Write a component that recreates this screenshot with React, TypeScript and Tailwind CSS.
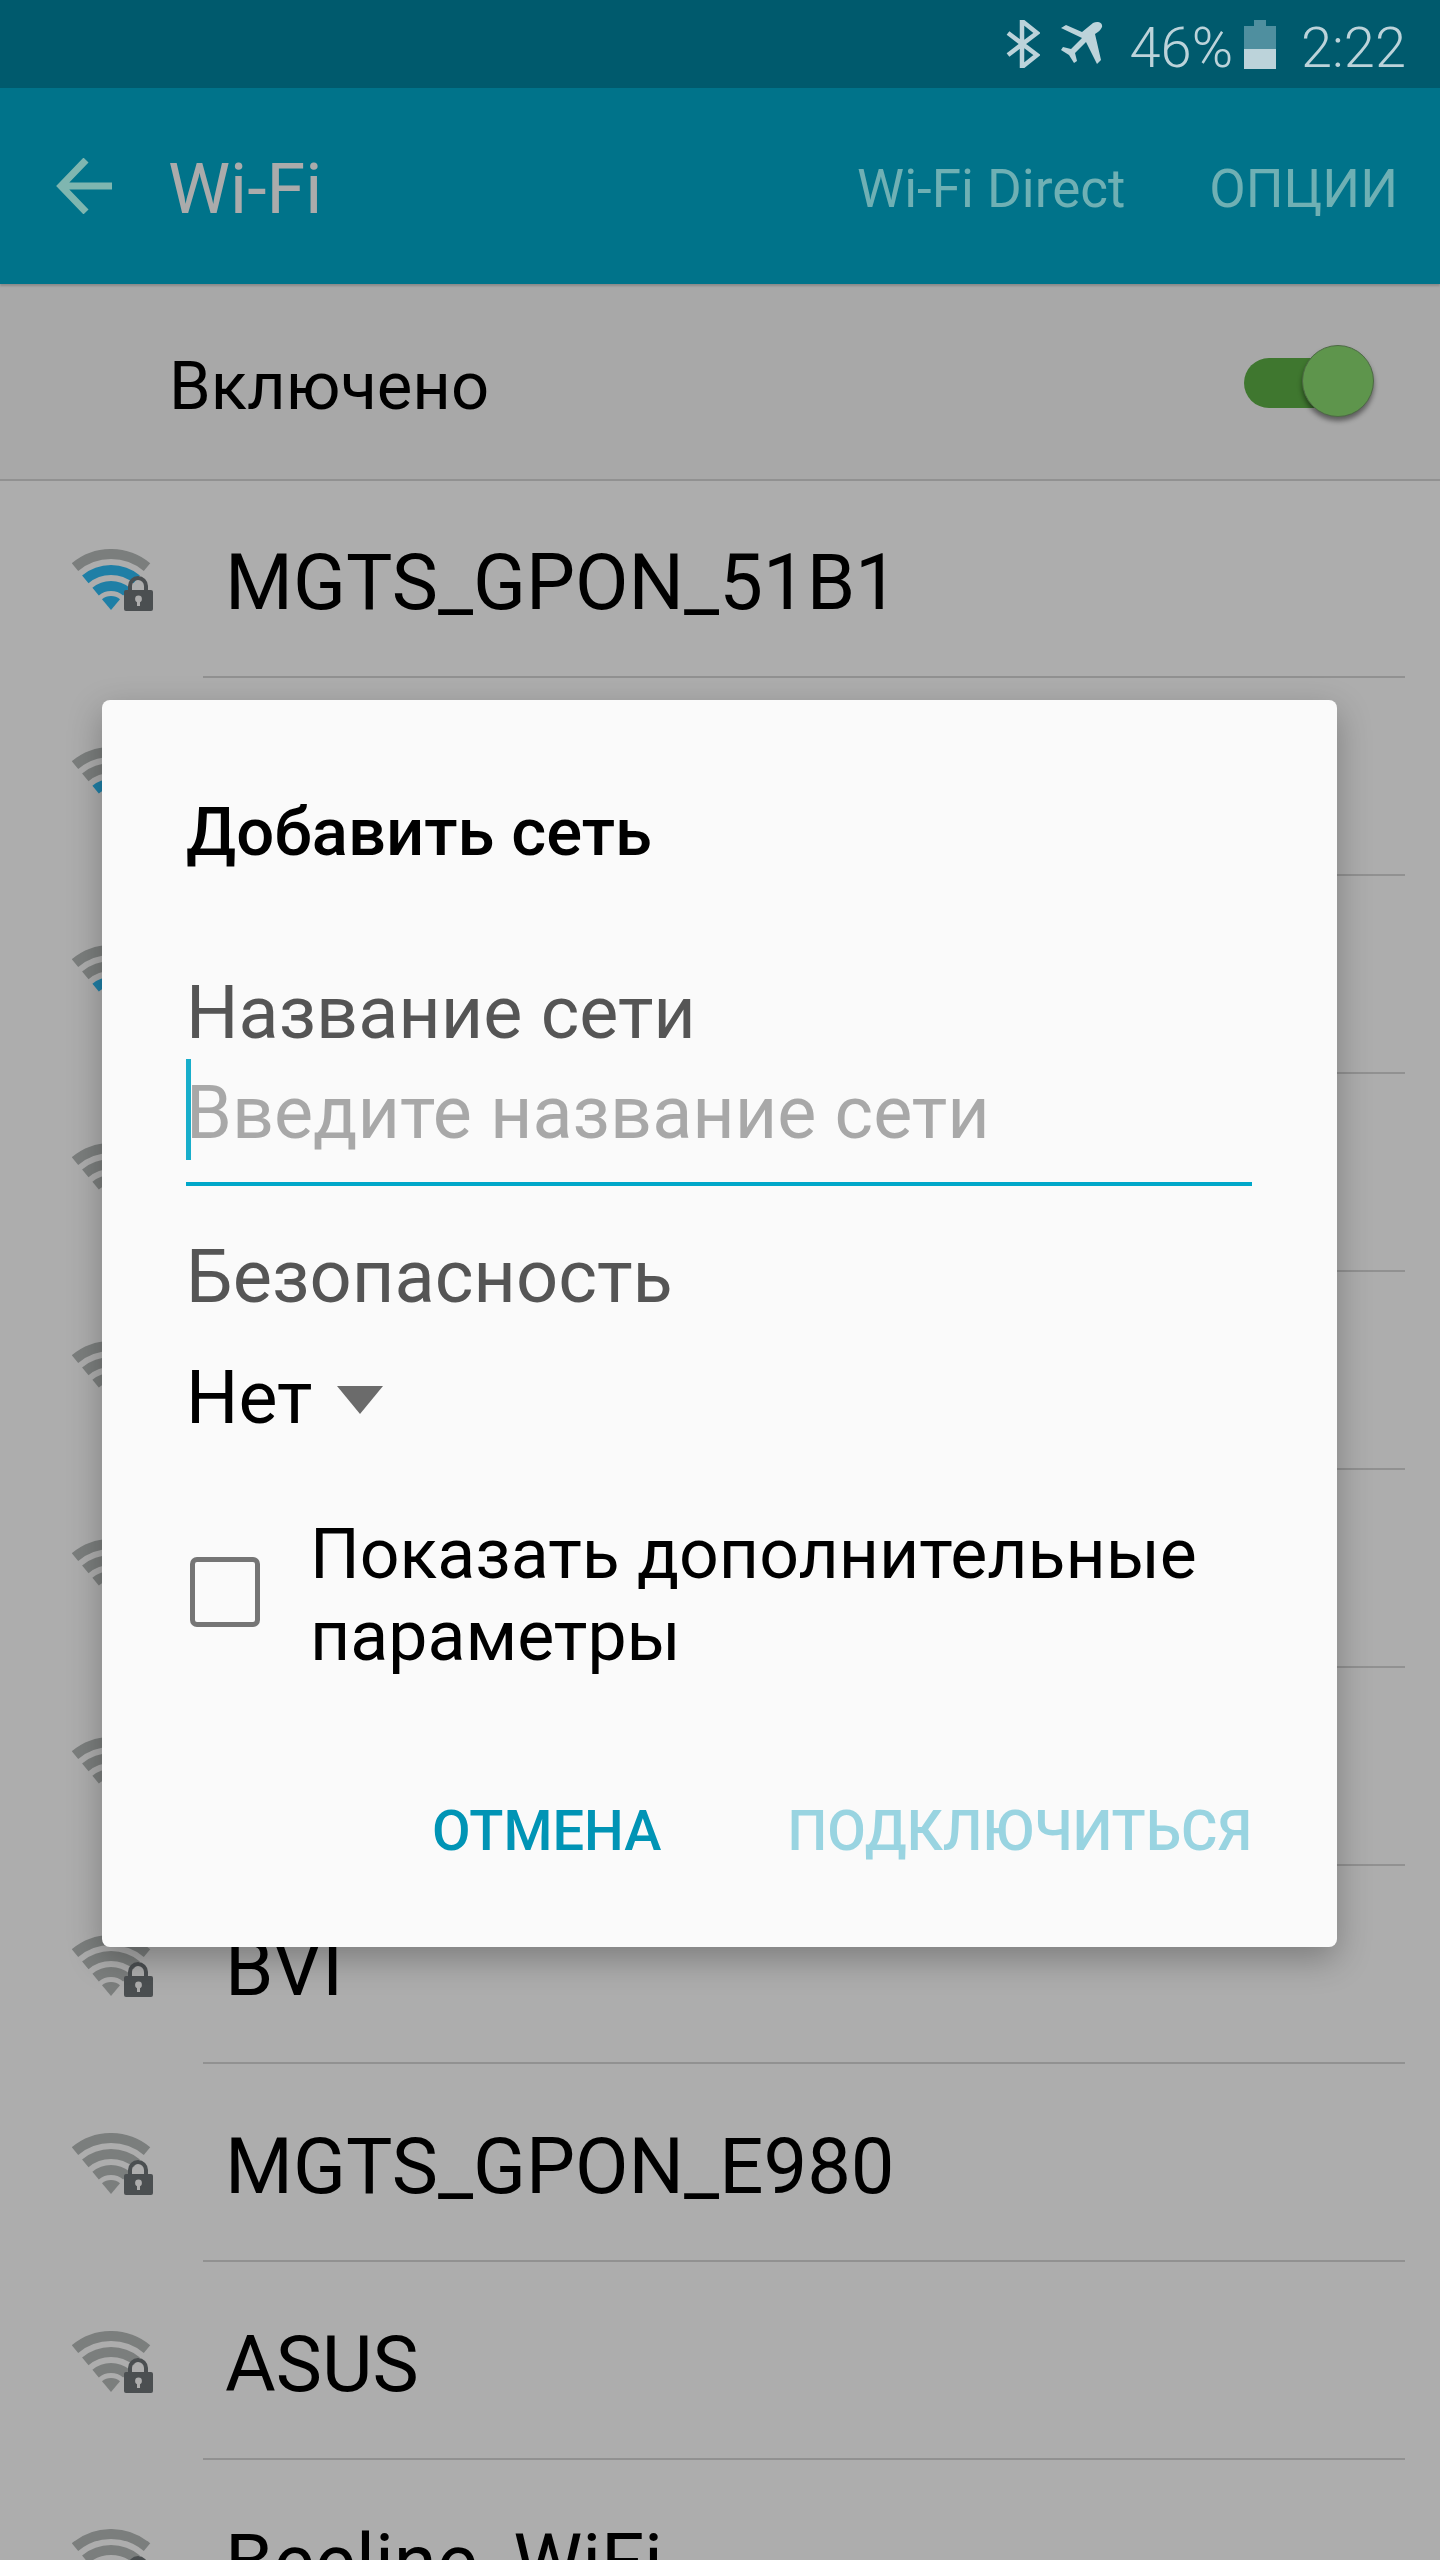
const font = { fontFamily: "Roboto, 'Noto Sans', sans-serif" };

const networks = [
  { name: "MGTS_GPON_51B1", level: 3 },
  { name: "", level: 2 },
  { name: "", level: 2 },
  { name: "", level: 0 },
  { name: "", level: 0 },
  { name: "", level: 0 },
  { name: "", level: 0 },
  { name: "BVI", level: 0 },
  { name: "MGTS_GPON_E980", level: 0 },
  { name: "ASUS", level: 0 },
  { name: "Beeline_WiFi", level: 0 },
];

const WifiLock = ({ level }: { level: number }) => {
  const blue = "#1f7fa6";
  const grey = "#7b7e7d";
  return (
    <svg width="82" height="62" viewBox="0 0 82 62" className="shrink-0">
      <g fill="none" strokeWidth="10">
        <path d="M3 18.1A56 56 0 0 1 75 18.1" stroke={grey} />
        <path d="M13.3 30.4A40 40 0 0 1 64.7 30.4" stroke={level >= 3 ? blue : grey} />
        <path d="M23.6 42.6A24 24 0 0 1 54.4 42.6" stroke={level >= 2 ? blue : grey} />
      </g>
      <path d="M39 61L30 50.3A14 14 0 0 1 48 50.3Z" fill={level >= 1 ? blue : grey} />
      <path d="M58 41v-4a8 8 0 0 1 16 0v4" fill="none" stroke="#4b4f51" strokeWidth="4" />
      <rect x="52" y="41" width="29" height="21" rx="2" fill="#4b4f51" />
      <circle cx="66.5" cy="50" r="3.4" fill="#adadad" />
      <rect x="65" y="50" width="3" height="7" fill="#adadad" />
    </svg>
  );
};

const App = () => {
  return (
    <div className="relative w-[1440px] h-[2560px] overflow-hidden bg-[#adadad] text-black" style={font}>
      {/* status bar */}
      <div className="h-[88px] bg-[#005a6d] flex items-center justify-end pr-[34px] text-[#bcd3da]">
        <svg width="34" height="48" viewBox="0 0 34 48" className="mr-[20px]">
          <path d="M2 13L31 35L16 47V1L31 13L2 35" fill="none" stroke="#bcd3da" strokeWidth="4.5" />
        </svg>
        <svg width="44" height="44" viewBox="0 0 44 44" className="mr-[26px]" fill="#bcd3da">
          <path d="M1 6L6 3L22 10L33 1C37-1 43 0 42 5C41 8 38 10 35 12L41 38L37 42L26 20L15 31L17 39L14 41L9 33L1 28L3 25L11 27L22 16L1 6Z" />
        </svg>
        <span className="text-[56px] leading-none font-light mr-[11px] mt-[8px]">46%</span>
        <div className="w-[32px] h-[49px] flex flex-col items-center mr-[25px]">
          <div className="w-[12px] h-[6px] bg-[#4f8f9f]" />
          <div className="w-[32px] h-[23px] bg-[#4f8f9f]" />
          <div className="w-[32px] h-[20px] bg-[#bcd3da]" />
        </div>
        <span className="text-[56px] leading-none font-light mt-[8px]">2:22</span>
      </div>

      {/* toolbar */}
      <div className="relative h-[196px] bg-[#00738a] flex items-center shadow-[0_2px_2px_rgba(0,0,0,0.18)]">
        <svg width="58" height="56" viewBox="0 0 58 56" className="ml-[56px] mr-[54px]">
          <path d="M56 28H5M30 2L5 28L30 54" fill="none" stroke="#7fb6b0" strokeWidth="7" />
        </svg>
        <span className="text-[70px] text-[#ababab] leading-none mt-[6px]">Wi-Fi</span>
        <span className="ml-auto text-[53px] text-[#6fb0b4] leading-none mt-[6px]">Wi-Fi Direct</span>
        <span className="ml-[84px] mr-[42px] text-[53px] text-[#6fb0b4] leading-none mt-[6px]">ОПЦИИ</span>
      </div>

      {/* toggle row */}
      <div className="h-[197px] bg-[#a8a8a8] border-b-2 border-[#919191] flex items-center pl-[169px] pr-[66px]">
        <span className="text-[67px] leading-none mt-[10px]">Включено</span>
        <div className="ml-auto relative w-[130px] h-[74px] flex items-center">
          <div className="w-[108px] h-[50px] rounded-full bg-[#3f772f] mt-[2px]" />
          <div className="absolute right-0 top-0 w-[72px] h-[72px] rounded-full bg-[#5e954c] border border-[#4d6a44] shadow-[0_4px_5px_rgba(0,0,0,0.45)]" />
        </div>
      </div>

      {/* networks */}
      {networks.map((n, i) => (
        <div key={i} className="h-[198px] relative flex items-center pl-[72px]">
          <WifiLock level={n.level} />
          <span className="ml-[71px] text-[77.8px] leading-none mt-[6px]">{n.name}</span>
          <div className="absolute left-[203px] right-[35px] bottom-[1px] h-[2px] bg-[#919191]" />
        </div>
      ))}

      {/* dialog */}
      <div className="absolute left-[102px] top-[700px] w-[1235px] h-[1247px] rounded-[8px] bg-[#fafafa] shadow-[0_12px_34px_rgba(0,0,0,0.28)] pl-[84px] pr-[85px]">
        <div className="pt-[92px] text-[67px] leading-[80px] font-medium">Добавить сеть</div>
        <div className="mt-[101px] text-[73.7px] leading-[80px] text-[#555555]">Название сети</div>
        <div className="relative mt-[6px] h-[101px] text-[73.7px] leading-[108px] text-[#a8a8a8]">
          Введите название сети
          <div className="absolute left-0 top-0 bottom-0 w-[5px] bg-[#18aecb]" />
        </div>
        <div className="mt-[22px] h-[4px] bg-[#00a7c9]" />
        <div className="mt-[51px] text-[74px] leading-[80px] text-[#555555]">Безопасность</div>
        <div className="mt-[41px] flex items-center text-[73.5px] leading-[80px] text-black">
          Нет
          <svg width="46" height="28" viewBox="0 0 46 28" className="ml-[25px] mt-[4px]"><path d="M0 0H46L23 28Z" fill="#6b6b6b" /></svg>
        </div>
        <div className="mt-[75px] flex items-center">
          <div className="shrink-0 ml-[4px] mb-[6px] w-[70px] h-[70px] rounded-[7px] border-[5px] border-[#757575]" />
          <div className="ml-[50px] text-[69.8px] leading-[82px]">Показать дополнительные параметры</div>
        </div>
        <div className="mt-[126px] flex justify-end text-[56px] font-medium leading-none">
          <span className="text-[#0094b5]">ОТМЕНА</span>
          <span className="ml-[126px] text-[#99d4e1]">ПОДКЛЮЧИТЬСЯ</span>
        </div>
      </div>
    </div>
  );
};

export default App;
